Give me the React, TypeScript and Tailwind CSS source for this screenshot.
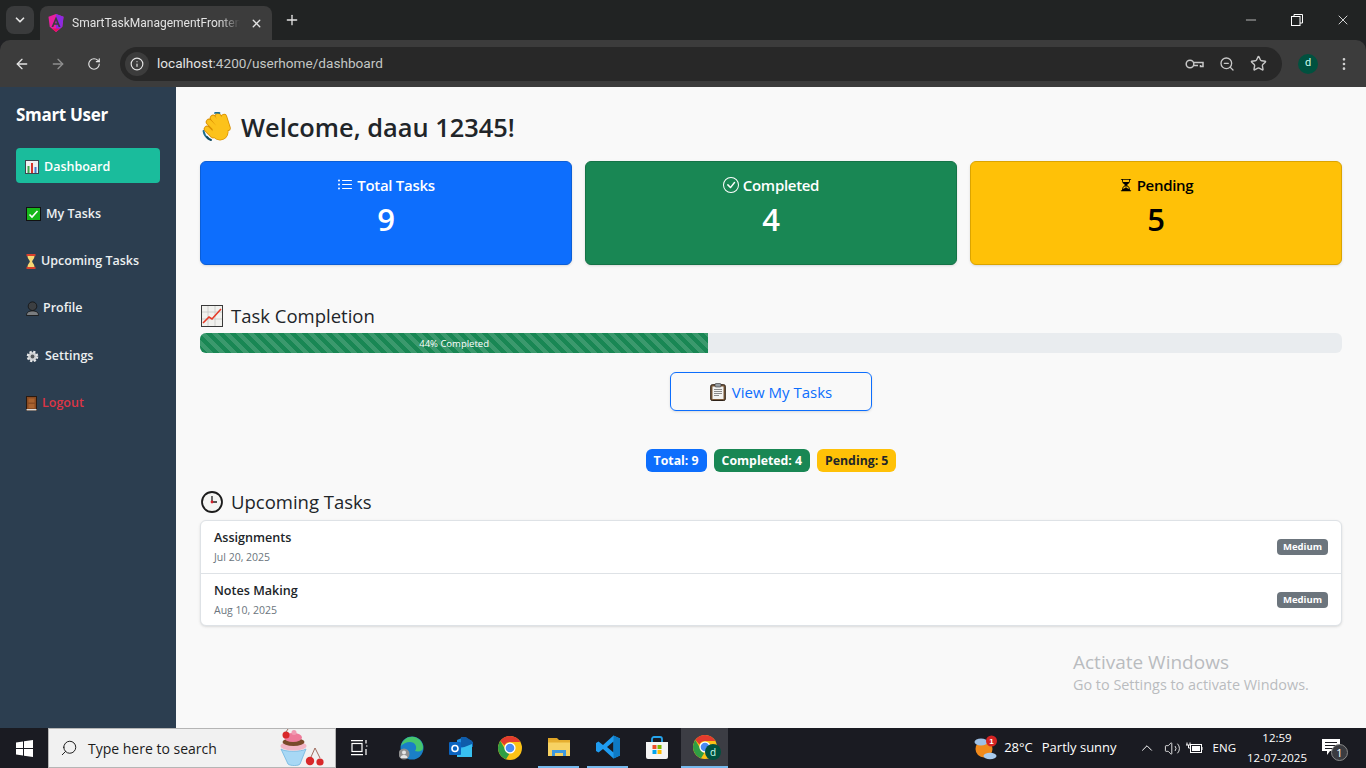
import { ArrowLeft, ArrowRight, ChevronDown, ChevronUp, EllipsisVertical, Info, Minus, Plus, RotateCw, Search, Star, Volume2, X, ZoomOut } from "lucide-react";
import type { ReactNode } from "react";
import { BsCheckCircle, BsHourglassSplit, BsListUl } from "react-icons/bs";

const BarsEmoji = () => (
  <svg width="14" height="14" viewBox="0 0 14 14">
    <rect x="0.5" y="0.5" width="13" height="13" fill="#eef1f2" stroke="#3b4650" />
    <rect x="2.5" y="6" width="2" height="7" fill="#39a84a" />
    <rect x="6" y="3" width="2" height="10" fill="#d6352c" />
    <rect x="9.5" y="7" width="2" height="6" fill="#3f7fd0" />
  </svg>
);

const CheckEmoji = () => (
  <svg width="15" height="14" viewBox="0 0 15 14">
    <rect x="0.5" y="0.5" width="14" height="13" fill="#16b71a" stroke="#111" />
    <path d="M3.5 7.5l2.5 2.500 5.500-6" fill="none" stroke="#fff" strokeWidth="1.600" />
  </svg>
);

const HourglassEmoji = () => (
  <svg width="10" height="15" viewBox="0 0 10 15">
    <rect x="0.5" y="0" width="9" height="2.200" fill="#d8402c" />
    <rect x="0.5" y="12.800" width="9" height="2.200" fill="#d8402c" />
    <path d="M1.500 2h7c0 3-2.200 4-2.400 5.500 0.200 1.500 2.400 2.500 2.400 5.500h-7c0-3 2.200-4 2.400-5.500C3.700 6 1.500 5 1.500 2z" fill="#f7d774" />
  </svg>
);

const BustEmoji = () => (
  <svg width="13" height="15" viewBox="0 0 13 15">
    <path d="M0.500 14.500c0-3.500 2.500-4.500 6-4.500s6 1 6 4.500z" fill="#7a7d80" stroke="#111" strokeWidth="0.800" />
    <circle cx="6.500" cy="5.200" r="4.300" fill="#3c3f42" stroke="#111" strokeWidth="0.800" />
  </svg>
);

const GearEmoji = () => (
  <svg width="13" height="13" viewBox="0 0 13 13">
    <circle cx="6.500" cy="6.500" r="4.300" fill="#c9cbcd" stroke="#e6e7e8" strokeWidth="3" strokeDasharray="2 1.400" />
    <circle cx="6.500" cy="6.500" r="3.800" fill="#cfd1d3" />
    <circle cx="6.500" cy="6.500" r="1.900" fill="#55585b" />
  </svg>
);

const DoorEmoji = () => (
  <svg width="11" height="15" viewBox="0 0 11 15">
    <rect x="0.500" y="0.500" width="10" height="14" fill="#8a4b22" stroke="#2a1a10" />
    <rect x="2.500" y="2.500" width="6" height="4" fill="#a8622f" />
    <rect x="2.500" y="8" width="6" height="4" fill="#a8622f" />
    <rect x="0.500" y="13" width="10" height="1.500" fill="#ddd" />
  </svg>
);

const WaveEmoji = () => (
  <svg width="30" height="30" viewBox="0 0 30 30">
    <g fill="none" strokeLinecap="round" stroke="#d98f00" strokeWidth="6.400">
      <path d="M7 10l10 10M11 6l9 11M16 4l7 12M22 5l3.500 11M5 17l6 6" />
    </g>
    <circle cx="18" cy="20" r="8.500" fill="#d98f00" />
    <g fill="none" strokeLinecap="round" stroke="#fcc21b" strokeWidth="4.800">
      <path d="M7 10l10 10M11 6l9 11M16 4l7 12M22 5l3.500 11M5 17l6 6" />
    </g>
    <circle cx="18" cy="20" r="7.800" fill="#fcc21b" />
    <path d="M1.500 19c0.500 3 2 5.500 4.500 7.500M13 1c1.500-0.500 3-0.500 4.500 0" fill="none" stroke="#1c6f8f" strokeWidth="1.800" strokeLinecap="round" />
    <path d="M5 25c1 1.500 2.500 2.500 4 3" fill="none" stroke="#0f4a63" strokeWidth="2" strokeLinecap="round" />
  </svg>
);

const ChartEmoji = () => (
  <svg width="22" height="22" viewBox="0 0 22 22">
    <rect x="0.500" y="0.500" width="21" height="21" fill="#f1f1ee" stroke="#3a3a3a" />
    <path d="M7 1v20M14 1v20M1 7h20M1 14h20" stroke="#c8c8c4" strokeWidth="0.800" />
    <path d="M2 18l6-6 3 2 9-10" fill="none" stroke="#e53a28" strokeWidth="1.600" />
  </svg>
);

const ClipboardEmoji = () => (
  <svg width="16" height="18" viewBox="0 0 16 18">
    <rect x="0.700" y="1.700" width="14.600" height="15.800" rx="1.500" fill="#7b5a3a" stroke="#2e2218" />
    <rect x="2.500" y="3.500" width="11" height="12.500" fill="#f3f3f1" />
    <rect x="5" y="0.500" width="6" height="3.500" rx="1" fill="#9aa0a5" stroke="#333" strokeWidth="0.600" />
    <path d="M4 6.500h8M4 8.500h8M4 10.500h8M4 12.500h5" stroke="#8a8a8a" strokeWidth="1" />
  </svg>
);

const ClockEmoji = () => (
  <svg width="22" height="22" viewBox="0 0 22 22">
    <circle cx="11" cy="11" r="10" fill="#f5f5f3" stroke="#1c1c1c" strokeWidth="1.800" />
    <path d="M11 5v6h5" fill="none" stroke="#222" strokeWidth="1.300" />
    <circle cx="11" cy="11" r="1.400" fill="#d8202a" />
  </svg>
);

const AngularLogo = () => (
  <svg width="16" height="18" viewBox="0 0 16 18">
    <path d="M8 0l7.500 2.700-1.200 10L8 18l-6.300-5.300L0.500 2.700z" fill="#e81fa0" />
    <path d="M8 0l7.500 2.700-1.200 10L8 18z" fill="#8b2be2" />
    <path d="M8 2.500L3.500 13h1.800l.9-2.300h3.600l.9 2.300h1.800z M7 9.200L8 6.500l1 2.700z" fill="#3c3c3c" fillRule="evenodd" />
    <path d="M4 14.500l4 3.500 4-3.500z" fill="#ec0f5f" />
  </svg>
);

const KeyIcon = () => (
  <svg width="19" height="12" viewBox="0 0 19 12" fill="none" stroke="#c7c7c7" strokeWidth="1.500">
    <circle cx="5" cy="6" r="3.800" />
    <path d="M8.800 4.500H18v4h-2.500V7M8.800 7.500H13" />
  </svg>
);

const StartLogo = () => (
  <svg width="17" height="17" viewBox="0 0 17 17" fill="#fff">
    <path d="M0 2.400l7-1v6.600H0zM8 1.300L17 0v8H8zM0 9h7v6.600l-7-1zM8 9h9v8l-9-1.300z" />
  </svg>
);

const Cupcake = () => (
  <svg width="46" height="38" viewBox="0 0 46 38">
    <path d="M2 20c4 3 20 3 25 0l-6 15c-1 2-10 2-12 0z" fill="#a8d8f5" stroke="#6fb5e0" strokeWidth="0.800" />
    <ellipse cx="14.500" cy="17" rx="13" ry="4.500" fill="#f3b6c6" />
    <ellipse cx="14.500" cy="13" rx="11" ry="4" fill="#7a4a2a" />
    <ellipse cx="14" cy="8.500" rx="9" ry="4.500" fill="#ee7a9a" />
    <circle cx="7" cy="6" r="3.500" fill="#d8282a" />
    <circle cx="15" cy="3.500" r="2.500" fill="#f09ab2" />
    <path d="M7 3l2-3M36 19l-4 9M36 19l5 10" fill="none" stroke="#8a4a3a" strokeWidth="0.800" />
    <circle cx="31" cy="32" r="4.200" fill="#d8282a" />
    <circle cx="41" cy="33" r="3.600" fill="#d8282a" />
  </svg>
);

const TaskView = () => (
  <svg width="18" height="16" viewBox="0 0 18 16" fill="none" stroke="#fff" strokeWidth="1.200">
    <rect x="1" y="3.500" width="10" height="8" />
    <path d="M0 0.700h12M0 14.700h12M15 0v3.500M15 6h1.500M15 9v6" />
  </svg>
);

const EdgeLogo = () => (
  <svg width="26" height="26" viewBox="0 0 26 26">
    <circle cx="13" cy="13" r="11.500" fill="#1a7fc7" />
    <path d="M2 11C4 3 12 0 18 3c4 2 6 6 6 10 0 3-4 4-8 3 3-4 0-9-5-9-4 0-7 2-9 4z" fill="#45c66e" />
    <circle cx="5" cy="19" r="5.500" fill="#8f8f8f" />
    <circle cx="5" cy="17.500" r="2" fill="#e5e5e5" />
    <path d="M1.500 23c0-2 1.500-3 3.500-3s3.500 1 3.500 3z" fill="#e5e5e5" />
  </svg>
);

const OutlookLogo = () => (
  <svg width="24" height="24" viewBox="0 0 24 24">
    <path d="M8 4l7-3 8 4v15H8z" fill="#1f8fe0" />
    <path d="M12 1h5l7 5v5H12z" fill="#0f5cab" />
    <path d="M8 14l15-6v13H8z" fill="#38c0f0" />
    <rect x="0" y="6" width="12" height="13" rx="1" fill="#0b64c0" />
    <circle cx="6" cy="12.500" r="3" fill="none" stroke="#fff" strokeWidth="1.600" />
  </svg>
);

const ChromeLogo = () => (
  <svg width="24" height="24" viewBox="0 0 24 24">
    <circle cx="12" cy="12" r="12" fill="#fbc116" />
    <path d="M12 0a12 12 0 0 1 10.400 6H12a6 6 0 0 0-5.500 3.400L2.300 5A12 12 0 0 1 12 0z" fill="#e33b2e" />
    <path d="M2.300 5l5 8.500a5.500 5.500 0 0 0 4 4.400L8 23.300A12 12 0 0 1 2.300 5z" fill="#2f9e44" />
    <circle cx="12" cy="12" r="5.600" fill="#fff" />
    <circle cx="12" cy="12" r="4.300" fill="#4a8af4" />
  </svg>
);

const FolderLogo = () => (
  <svg width="22" height="20" viewBox="0 0 22 20">
    <path d="M0 1h9l2 2h-11z" fill="#e0a526" />
    <rect x="0" y="3" width="22" height="16" fill="#f7d263" />
    <rect x="0" y="3" width="22" height="2.500" fill="#e6ae2f" />
    <path d="M4 19v-6h14v6h-3v-3H7v3z" fill="#3f9ae0" />
  </svg>
);

const VsCodeLogo = () => (
  <svg width="24" height="24" viewBox="0 0 24 24">
    <path d="M17.500 0.500L24 3.500v17l-6.500 3L7 14l-4.500 3.500L0 16V8l2.500-1.500L7 10z M17.500 6.500L11 12l6.500 5.500z" fill="#1f9cf0" fillRule="evenodd" />
    <path d="M17.500 0.500L24 3.500v17l-6.500 3z M17.500 6.500v11" fill="#0e7ac4" />
  </svg>
);

const StoreLogo = () => (
  <svg width="24" height="24" viewBox="0 0 24 24">
    <path d="M7 6V3a2 2 0 0 1 2-2h6a2 2 0 0 1 2 2v3" fill="none" stroke="#25a4ec" strokeWidth="1.800" />
    <path d="M1 6h22v15a2 2 0 0 1-2 2H3a2 2 0 0 1-2-2z" fill="#f5f5f5" />
    <rect x="7.500" y="9" width="4" height="4" fill="#ee4f2a" />
    <rect x="12.500" y="9" width="4" height="4" fill="#7fba00" />
    <rect x="7.500" y="14" width="4" height="4" fill="#00a4ef" />
    <rect x="12.500" y="14" width="4" height="4" fill="#ffb900" />
  </svg>
);

const WeatherIcon = () => (
  <svg width="26" height="26" viewBox="0 0 26 26">
    <circle cx="11" cy="14" r="8.500" fill="#f08a1c" />
    <ellipse cx="8" cy="7" rx="6.500" ry="3.500" fill="#9fc1e6" />
    <ellipse cx="17" cy="21" rx="6.500" ry="3.300" fill="#a9cbee" />
    <circle cx="18.500" cy="6" r="5.500" fill="#d62424" />
    <text x="18.500" y="9" fontSize="8" fontWeight="700" textAnchor="middle" fill="#fff" fontFamily="'Liberation Sans', sans-serif">1</text>
  </svg>
);

const BatteryIcon = () => (
  <svg width="17" height="12" viewBox="0 0 17 12" fill="none" stroke="#fff" strokeWidth="1">
    <rect x="4.500" y="2.500" width="11" height="8" />
    <rect x="6" y="4" width="8" height="5" fill="#fff" stroke="none" />
    <path d="M16 5v3M1 0.500v2.500M4 0.500v2.500M0 3h5M2.500 3v3h2" />
  </svg>
);

const Notification = () => (
  <div className="relative w-[26px] h-[26px]">
    <svg width="18" height="17" viewBox="0 0 18 17" className="absolute left-0 top-1">
      <path d="M0 0h18v12H8l-3 4v-4H0z" fill="#fff" />
      <path d="M3 3.500h12M3 6.500h12M3 9.500h8" stroke="#1a1b22" strokeWidth="1" />
    </svg>
    <div className="absolute right-0 bottom-0 w-[17px] h-[17px] rounded-full bg-[#3a3b40] border border-[#888] text-white text-[11px] leading-[15px] text-center">
      1
    </div>
  </div>
);

const navItems: { label: string; icon: ReactNode; gap: string }[] = [
  { label: "My Tasks", icon: <CheckEmoji />, gap: "gap-[5px]" },
  { label: "Upcoming Tasks", icon: <HourglassEmoji />, gap: "gap-[5px]" },
  { label: "Profile", icon: <BustEmoji />, gap: "gap-[4px]" },
  { label: "Settings", icon: <GearEmoji />, gap: "gap-[6px]" },
];

const stats = [
  { label: "Total Tasks", value: "9", bg: "bg-[#0d6efd] border-[#0b5ed7] text-white", icon: <BsListUl size={16} /> },
  { label: "Completed", value: "4", bg: "bg-[#198754] border-[#157347] text-white", icon: <BsCheckCircle size={16} /> },
  { label: "Pending", value: "5", bg: "bg-[#ffc107] border-[#dba400] text-black", icon: <BsHourglassSplit size={14} /> },
];

const tasks = [
  { title: "Assignments", date: "Jul 20, 2025" },
  { title: "Notes Making", date: "Aug 10, 2025" },
];

const Browser = () => (
  <div className="bg-[#202124] h-[87px] shrink-0 font-['Roboto',sans-serif] text-[#e3e3e3]">
    <div className="h-10 flex items-end bg-[#212323]">
      <div className="w-[28px] h-[28px] ml-[6px] mb-[6px] rounded-lg bg-[#3a3b3c] flex items-center justify-center">
        <ChevronDown size={14} strokeWidth={3} />
      </div>
      <div className="w-[232px] h-[34px] ml-[6px] rounded-t-lg bg-[#3c3c3c] flex items-center pl-2 pr-[9px]">
        <AngularLogo />
        <span className="ml-[8px] w-[168px] text-[12px] whitespace-nowrap overflow-hidden [mask-image:linear-gradient(90deg,#000_88%,transparent)]">
          SmartTaskManagementFrontend
        </span>
        <X size={13} strokeWidth={2.500} className="ml-auto" />
      </div>
      <Plus size={16} strokeWidth={2} className="ml-[12px] mb-[12px]" />
      <div className="ml-auto flex items-center h-10 pr-[15px] gap-[32px] text-white">
        <Minus size={16} strokeWidth={1} />
        <svg width="12" height="12" viewBox="0 0 12 12" fill="none" stroke="#fff" strokeWidth="1">
          <rect x="0.500" y="2.500" width="8.500" height="9" />
          <path d="M3 2.500V0.500h8.500v8.500H9" />
        </svg>
        <X size={16} strokeWidth={1.200} />
      </div>
    </div>
    <div className="h-[47px] bg-[#3c3c3c] rounded-t-[10px] flex items-center">
      <ArrowLeft size={16} className="ml-[14px]" />
      <ArrowRight size={16} className="ml-[20px] text-[#8f8f8f]" />
      <RotateCw size={14} className="ml-[21px]" />
      <div className="w-[1162px] h-[34px] ml-[19px] rounded-full bg-[#282828] flex items-center">
        <div className="w-[24px] h-[24px] ml-[5px] rounded-full bg-[#3c3c3c] flex items-center justify-center">
          <Info size={14} />
        </div>
        <span className="ml-[8px] text-[13.600px]">
          localhost<span className="text-[#c4c7c5]">:4200/userhome/dashboard</span>
        </span>
        <div className="ml-auto flex items-center gap-[15px] pr-[15px] text-[#c7c7c7]">
          <KeyIcon />
          <ZoomOut size={16} />
          <Star size={17} />
        </div>
      </div>
      <div className="ml-[16px] w-5 h-5 rounded-full bg-[#00513f] text-[#cfe] text-[11px] flex items-center justify-center">d</div>
      <EllipsisVertical size={16} className="ml-[18px] text-[#d0d0d0]" />
    </div>
  </div>
);

const Sidebar = () => (
  <aside className="w-[176px] shrink-0 bg-[#2c3e50] px-4 pt-4 text-[#ecf0f1]">
    <h2 className="text-[17px] leading-6 font-bold tracking-[-0.300px] text-white mb-[21px]">Smart User</h2>
    <div className="flex flex-col gap-[12.250px] text-[12.500px] font-semibold">
      <a className="h-[35px] pt-[3px] pl-[9px] flex items-center gap-[5px] rounded bg-[#1abc9c] text-white">
        <BarsEmoji />
        Dashboard
      </a>
      {navItems.map((item) => (
        <a key={item.label} className={`h-[35px] pt-[3px] pl-[10px] flex items-center ${item.gap}`}>
          {item.icon}
          {item.label}
        </a>
      ))}
      <a className="h-[35px] pt-[3px] pl-[10px] flex items-center gap-[5px] text-[#dc3545]">
        <DoorEmoji />
        Logout
      </a>
    </div>
  </aside>
);

const Main = () => (
  <main className="relative flex-1 bg-[#f9f9f9] px-6 pt-[22px] text-[#212529]">
    <h1 className="flex items-center gap-[9px] h-[36px] text-[25.400px] font-semibold">
      <span className="ml-[2px]"><WaveEmoji /></span>
      Welcome, daau 12345!
    </h1>
    <div className="grid grid-cols-3 gap-[13px] mt-[16px]">
      {stats.map((s) => (
        <div key={s.label} className={`h-[104px] rounded-md border shadow-sm flex flex-col items-center pt-[11px] ${s.bg}`}>
          <div className="flex items-center gap-[4px] text-[15px] tracking-[-0.300px] leading-6 font-semibold">
            {s.icon}
            {s.label}
          </div>
          <div className="text-[31px] leading-[45px] font-semibold">{s.value}</div>
        </div>
      ))}
    </div>
    <h3 className="flex items-center gap-[8px] mt-[38px] h-[26px] text-[18.500px] font-medium">
      <span className="ml-[1px]"><ChartEmoji /></span>
      Task Completion
    </h3>
    <div className="mt-[4px] h-5 rounded-md bg-[#e9ecef] overflow-hidden">
      <div className="w-[44.500%] h-full bg-[#198754] bg-[linear-gradient(45deg,rgba(255,255,255,0.150)_25%,transparent_25%,transparent_50%,rgba(255,255,255,0.150)_50%,rgba(255,255,255,0.150)_75%,transparent_75%)] bg-[length:12px_12px] text-white text-[9.500px] leading-[21px] text-center">
        44% Completed
      </div>
    </div>
    <div className="flex justify-center mt-[19px]">
      <button className="w-[202px] h-[39px] pt-[1px] rounded-md border border-[#0d6efd] text-[#0d6efd] shadow-sm flex items-center justify-center gap-[6px] text-[15px]">
        <ClipboardEmoji />
        View My Tasks
      </button>
    </div>
    <div className="flex justify-center gap-[7px] mt-[38px] text-[12.300px] font-bold leading-[22px]">
      <span className="px-2 pt-[1px] rounded-md bg-[#0d6efd] text-white">Total: 9</span>
      <span className="px-2 pt-[1px] rounded-md bg-[#198754] text-white">Completed: 4</span>
      <span className="px-2 pt-[1px] rounded-md bg-[#ffc107] text-[#212529]">Pending: 5</span>
    </div>
    <h3 className="flex items-center gap-[8px] mt-[17px] h-[26px] text-[18.500px] font-medium">
      <span className="ml-[1px]"><ClockEmoji /></span>
      Upcoming Tasks
    </h3>
    <div className="mt-[5px] rounded-md border border-[#dee2e6] bg-white shadow-sm">
      {tasks.map((t, i) => (
        <div key={t.title} className={`h-[52px] px-[13px] flex items-center justify-between ${i ? "border-t border-[#dee2e6]" : ""}`}>
          <div className="-mt-[1px]">
            <div className="text-[12.600px] leading-[20px] font-semibold mb-[1px]">{t.title}</div>
            <div className="text-[10.500px] leading-[16px] text-[#6c757d]">{t.date}</div>
          </div>
          <span className="px-[6px] rounded bg-[#6c757d] text-white text-[9.500px] font-bold leading-[16px]">Medium</span>
        </div>
      ))}
    </div>
    <div className="absolute left-[897px] top-[563px] text-[#b9bcbf]">
      <div className="text-[19px] leading-6">Activate Windows</div>
      <div className="text-[14.400px] leading-[22px] whitespace-nowrap">Go to Settings to activate Windows.</div>
    </div>
  </main>
);

const Taskbar = () => (
  <div className="h-10 shrink-0 bg-[#1a1b22] flex items-center text-white font-['Open_Sans',sans-serif]">
    <div className="w-12 flex justify-center"><StartLogo /></div>
    <div className="w-[288px] h-10 bg-[#f1f1f1] border border-[#b5b5b5] flex items-center pl-[11px] text-[#1c1c1c] text-[14px]">
      <Search size={18} strokeWidth={1.300} className="-scale-x-100" />
      <span className="ml-[10px]">Type here to search</span>
      <div className="ml-auto mr-[10px]"><Cupcake /></div>
    </div>
    <div className="ml-[15px]"><TaskView /></div>
    <div className="ml-[19px] flex items-center h-10">
      <div className="w-12 h-10 flex items-center justify-center"><EdgeLogo /></div>
      <div className="w-[49px] h-10 flex items-center justify-center"><OutlookLogo /></div>
      <div className="w-[49px] h-10 flex items-center justify-center"><ChromeLogo /></div>
      <div className="w-[41px] mx-[4px] h-10 flex items-center justify-center border-b-2 border-[#76b9ed]"><FolderLogo /></div>
      <div className="w-[41px] mx-[4px] h-10 flex items-center justify-center border-b-2 border-[#76b9ed]"><VsCodeLogo /></div>
      <div className="w-[49px] h-10 flex items-center justify-center"><StoreLogo /></div>
      <div className="relative w-[47px] h-10 flex items-center justify-center bg-[#3c3d44] border-b-2 border-[#76b9ed]">
        <ChromeLogo />
        <div className="absolute right-[7px] bottom-[6px] w-4 h-4 rounded-full bg-[#00513f] text-[#cfe] text-[10px] leading-4 text-center">d</div>
      </div>
    </div>
    <div className="ml-auto flex items-center text-[13px]">
      <WeatherIcon />
      <span className="ml-[5px]">28°C</span>
      <span className="ml-[9px]">Partly sunny</span>
      <ChevronUp size={18} strokeWidth={1.300} className="ml-[21px]" />
      <Volume2 size={17} strokeWidth={1.200} className="ml-[8px]" />
      <span className="ml-[5px]"><BatteryIcon /></span>
      <span className="ml-[10px] text-[11.500px]">ENG</span>
      <div className="ml-[8px] w-[66px] text-center text-[11.500px] leading-[20px]">
        <div>12:59</div>
        <div>12-07-2025</div>
      </div>
      <div className="ml-[12px] mr-[18px]"><Notification /></div>
    </div>
  </div>
);

export default function App() {
  return (
    <div className="w-[1366px] h-[768px] flex flex-col overflow-hidden font-['Open_Sans',sans-serif]">
      <Browser />
      <div className="flex flex-1 min-h-0">
        <Sidebar />
        <Main />
      </div>
      <Taskbar />
    </div>
  );
}
